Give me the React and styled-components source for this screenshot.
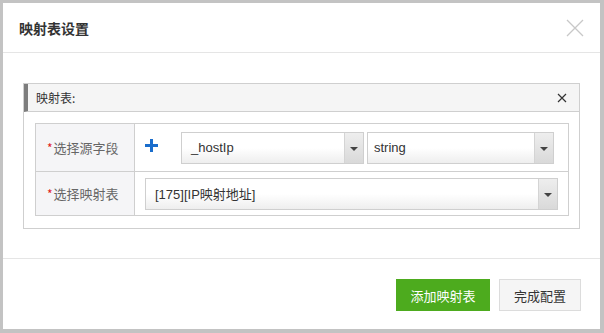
import React from "react";
import styled, { createGlobalStyle } from "styled-components";

const Global = createGlobalStyle`
  html, body { margin: 0; padding: 0; background: #c3c3c3; }
  body { font-family: "Liberation Sans", "Noto Sans CJK SC", sans-serif; }
  * { box-sizing: border-box; }
`;

const Frame = styled.div`
  width: 604px;
  height: 333px;
  padding: 3px 4px 4px 3px;
  background: #c3c3c3;
`;

const Dialog = styled.div`
  height: 100%;
  background: #fff;
  display: flex;
  flex-direction: column;
`;

const Header = styled.div`
  height: 51px;
  padding: 0 16px 0 16px;
  display: flex;
  align-items: center;
  justify-content: space-between;
  border-bottom: 1px solid #e5e5e5;
`;

const Title = styled.div`
  font-size: 14px;
  font-weight: 700;
  color: #333;
  font-family: "Noto Sans CJK SC", sans-serif;
  padding-top: 1px;
`;

const CloseBtn = styled.div`
  width: 18px;
  height: 18px;
  display: flex;
  margin-top: 1px;
`;

const Body = styled.div`
  flex: 1;
  padding: 30px 20px 29px 20px;
  border-bottom: 1px solid #e5e5e5;
`;

const Panel = styled.div`
  border: 1px solid #cfcfcf;
`;

const PanelHead = styled.div`
  height: 28px;
  background: #f5f5f5;
  border-left: 4px solid #7d7d7d;
  border-bottom: 1px solid #cfcfcf;
  display: flex;
  align-items: center;
  justify-content: space-between;
  padding: 0 12px 0 8px;
  font-size: 12px;
  color: #333;
  font-family: "Noto Sans CJK SC", sans-serif;
`;

const SmallX = styled.div`
  display: flex;
  width: 10px;
  height: 10px;
`;

const PanelBody = styled.div`
  padding: 11px 10px 12px 11px;
`;

const Table = styled.div`
  border: 1px solid #cfcfcf;
  display: grid;
  grid-template-columns: 99px 1fr;
`;

const Label = styled.div`
  background: #f5f5f7;
  border-right: 1px solid #cfcfcf;
  border-bottom: ${(p) => (p.last ? "none" : "1px solid #cfcfcf")};
  height: ${(p) => p.h}px;
  display: flex;
  align-items: center;
  padding-left: 11px;
  font-size: 13px;
  color: #666;
  font-family: "Noto Sans CJK SC", sans-serif;
`;

const Star = styled.span`
  color: #e02020;
  font-size: 12px;
  margin-right: 1px;
`;

const Cell = styled.div`
  border-bottom: ${(p) => (p.last ? "none" : "1px solid #cfcfcf")};
  height: ${(p) => p.h}px;
  display: flex;
  align-items: center;
  padding: 0 ${(p) => p.pr}px 0 ${(p) => p.pl}px;
`;

const Plus = styled.div`
  width: 24px;
  margin-right: 12px;
  display: flex;
  align-items: center;
  margin-top: -4px;
`;

const Select = styled.div`
  height: 32px;
  width: ${(p) => (p.w ? p.w + "px" : "auto")};
  flex: ${(p) => (p.w ? "none" : "1")};
  margin-right: ${(p) => p.mr || 0}px;
  border: 1px solid #cfcfcf;
  background: linear-gradient(#ffffff 0%, #ffffff 50%, #eeeeee 100%);
  display: flex;
  align-items: stretch;
`;

const SelectText = styled.div`
  flex: 1;
  display: flex;
  align-items: center;
  padding-left: ${(p) => p.pl || 9}px;
  font-size: 13px;
  color: #333;
  font-family: "Liberation Sans", "Noto Sans CJK SC", sans-serif;
`;

const Arrow = styled.div`
  width: 19px;
  border-left: 1px solid #d4d4d4;
  background: linear-gradient(#eeeeee, #d9d9d9);
  display: flex;
  align-items: center;
  justify-content: center;
  &::after {
    content: "";
    border-left: 4px solid transparent;
    border-right: 4px solid transparent;
    border-top: 4px solid #444;
    margin-top: 2px;
  }
`;

const Footer = styled.div`
  height: 71px;
  display: flex;
  justify-content: flex-end;
  align-items: flex-start;
  padding: 20px 19px 0 0;
  gap: 9px;
`;

const Button = styled.div`
  height: 32px;
  width: ${(p) => p.w}px;
  display: flex;
  align-items: center;
  justify-content: center;
  font-size: 13px;
  font-family: "Noto Sans CJK SC", sans-serif;
  background: ${(p) => (p.primary ? "#4dab1e" : "#f5f5f5")};
  color: ${(p) => (p.primary ? "#fff" : "#333")};
  border: 1px solid ${(p) => (p.primary ? "#4dab1e" : "#dcdcdc")};
`;

export default function App() {
  return (
    <>
      <Global />
      <Frame>
        <Dialog>
          <Header>
            <Title>映射表设置</Title>
            <CloseBtn>
              <svg width="18" height="18" viewBox="0 0 18 18">
                <path d="M1 1 L17 17 M17 1 L1 17" stroke="#c8c8c8" strokeWidth="1.3" />
              </svg>
            </CloseBtn>
          </Header>
          <Body>
            <Panel>
              <PanelHead>
                <span>映射表:</span>
                <SmallX>
                  <svg width="10" height="10" viewBox="0 0 10 10">
                    <path d="M1 1 L9 9 M9 1 L1 9" stroke="#333" strokeWidth="1.2" />
                  </svg>
                </SmallX>
              </PanelHead>
              <PanelBody>
                <Table>
                  <Label h={48}>
                    <Star>*</Star>选择源字段
                  </Label>
                  <Cell h={48} pl={10} pr={14}>
                    <Plus>
                      <svg width="13" height="13" viewBox="0 0 13 13">
                        <path d="M5 0 H8 V5 H13 V8 H8 V13 H5 V8 H0 V5 H5 Z" fill="#1a6dcc" />
                      </svg>
                    </Plus>
                    <Select w={183} mr={3}>
                      <SelectText>_hostIp</SelectText>
                      <Arrow />
                    </Select>
                    <Select>
                      <SelectText pl={6}>string</SelectText>
                      <Arrow />
                    </Select>
                  </Cell>
                  <Label h={43} last>
                    <Star>*</Star>选择映射表
                  </Label>
                  <Cell h={43} last pl={10} pr={10}>
                    <Select>
                      <SelectText>[175][IP映射地址]</SelectText>
                      <Arrow />
                    </Select>
                  </Cell>
                </Table>
              </PanelBody>
            </Panel>
          </Body>
          <Footer>
            <Button primary w={94}>添加映射表</Button>
            <Button w={82}>完成配置</Button>
          </Footer>
        </Dialog>
      </Frame>
    </>
  );
}
